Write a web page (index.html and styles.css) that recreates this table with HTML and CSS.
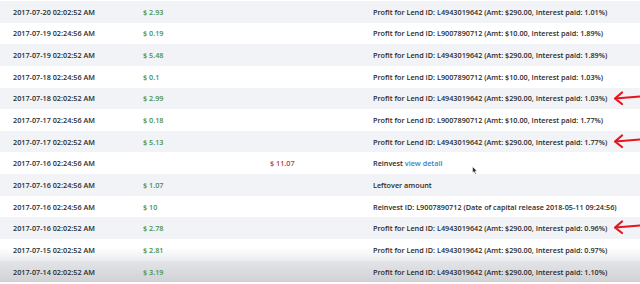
FILE: index.html
```html
<!DOCTYPE html>
<html>
<head>
<meta charset="utf-8">
<link rel="stylesheet" href="styles.css">
</head>
<body>
<div class="table">
  <div class="row odd"><span class="date">2017-07-20 02:02:52 AM</span><span class="in">$ 2.93</span><span class="out"></span><span class="desc">Profit for Lend ID: L4943019642 (Amt: $290.00, Interest paid: 1.01%)</span></div>
  <div class="row"><span class="date">2017-07-19 02:24:56 AM</span><span class="in">$ 0.19</span><span class="out"></span><span class="desc">Profit for Lend ID: L9007890712 (Amt: $10.00, Interest paid: 1.89%)</span></div>
  <div class="row odd"><span class="date">2017-07-19 02:02:52 AM</span><span class="in">$ 5.48</span><span class="out"></span><span class="desc">Profit for Lend ID: L4943019642 (Amt: $290.00, Interest paid: 1.89%)</span></div>
  <div class="row"><span class="date">2017-07-18 02:24:56 AM</span><span class="in">$ 0.1</span><span class="out"></span><span class="desc">Profit for Lend ID: L9007890712 (Amt: $10.00, Interest paid: 1.03%)</span></div>
  <div class="row odd"><span class="date">2017-07-18 02:02:52 AM</span><span class="in">$ 2.99</span><span class="out"></span><span class="desc">Profit for Lend ID: L4943019642 (Amt: $290.00, Interest paid: 1.03%)</span><svg class="arrow" width="26" height="14" viewBox="0 0 26 14"><path d="M1 7.5 L26 5.5 M8 1.5 L1 7.5 L8 13" fill="none" stroke="#e8141b" stroke-width="2.2" stroke-linecap="round" stroke-linejoin="round"/></svg></div>
  <div class="row"><span class="date">2017-07-17 02:24:56 AM</span><span class="in">$ 0.18</span><span class="out"></span><span class="desc">Profit for Lend ID: L9007890712 (Amt: $10.00, Interest paid: 1.77%)</span></div>
  <div class="row odd"><span class="date">2017-07-17 02:02:52 AM</span><span class="in">$ 5.13</span><span class="out"></span><span class="desc">Profit for Lend ID: L4943019642 (Amt: $290.00, Interest paid: 1.77%)</span><svg class="arrow" width="26" height="14" viewBox="0 0 26 14"><path d="M1 7.5 L26 5.5 M8 1.5 L1 7.5 L8 13" fill="none" stroke="#e8141b" stroke-width="2.2" stroke-linecap="round" stroke-linejoin="round"/></svg></div>
  <div class="row"><span class="date">2017-07-16 02:24:56 AM</span><span class="in"></span><span class="out">$ 11.07</span><span class="desc">Reinvest <a class="link">view detail</a></span></div>
  <div class="row odd"><span class="date">2017-07-16 02:24:56 AM</span><span class="in">$ 1.07</span><span class="out"></span><span class="desc">Leftover amount</span><svg class="cursor" width="6" height="9" viewBox="0 0 6 9"><path d="M0.5 0.5 L0.5 7 L2 5.6 L3.2 8.3 L4.2 7.8 L3 5.2 L5 5.2 Z" fill="#222" stroke="#fff" stroke-width="0.6"/></svg></div>
  <div class="row"><span class="date">2017-07-16 02:24:56 AM</span><span class="in">$ 10</span><span class="out"></span><span class="desc">Reinvest ID: L9007890712 (Date of capital release 2018-05-11 09:24:56)</span></div>
  <div class="row odd"><span class="date">2017-07-16 02:02:52 AM</span><span class="in">$ 2.78</span><span class="out"></span><span class="desc">Profit for Lend ID: L4943019642 (Amt: $290.00, Interest paid: 0.96%)</span><svg class="arrow" width="26" height="14" viewBox="0 0 26 14"><path d="M1 7.5 L26 5.5 M8 1.5 L1 7.5 L8 13" fill="none" stroke="#e8141b" stroke-width="2.2" stroke-linecap="round" stroke-linejoin="round"/></svg></div>
  <div class="row fade"><span class="date">2017-07-15 02:02:52 AM</span><span class="in">$ 2.81</span><span class="out"></span><span class="desc">Profit for Lend ID: L4943019642 (Amt: $290.00, Interest paid: 0.97%)</span></div>
  <div class="row last"><span class="date">2017-07-14 02:02:52 AM</span><span class="in">$ 3.19</span><span class="out"></span><span class="desc">Profit for Lend ID: L4943019642 (Amt: $290.00, Interest paid: 1.10%)</span></div>
</div>
</body>
</html>
```
FILE: styles.css
```css
html, body {
  margin: 0;
  padding: 0;
  background: #ffffff;
  overflow: hidden;
}
body {
  font-family: "Open Sans", "Liberation Sans", sans-serif;
  font-size: 7.25px;
  font-weight: 600;
  color: #2b2b2b;
}
.table {
  padding-top: 1px;
}
.row {
  position: relative;
  display: grid;
  grid-template-columns: 130px 127px 103px 1fr;
  align-items: center;
  height: 21.65px;
  padding-left: 13px;
  white-space: nowrap;
}
.row.odd {
  background: #f1f3f6;
}
.row.fade {
  background: linear-gradient(#ffffff 40%, #eaecef);
}
.row.last {
  background: linear-gradient(#e2e4e7, #d0d2d5);
}
.in {
  color: #4a914a;
  font-weight: 600;
}
.out {
  color: #b3404a;
  font-weight: 600;
}
.desc {
  color: #2b2b2b;
}
.link {
  color: #3b80c2;
}
.arrow {
  position: absolute;
  left: 614px;
  top: 3px;
}
.cursor {
  position: absolute;
  left: 472px;
  top: -8px;
}
```
